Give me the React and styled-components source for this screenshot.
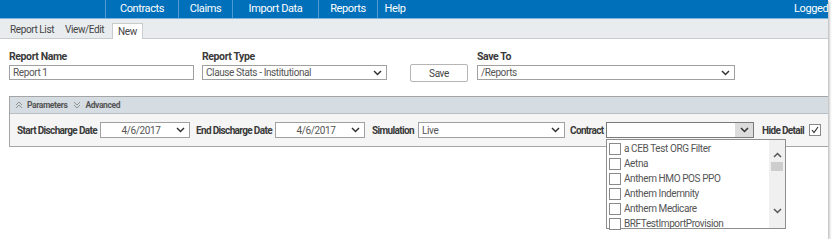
import React from 'react';
import styled, { createGlobalStyle } from 'styled-components';

const GlobalStyle = createGlobalStyle`
  body {
    margin: 0;
    background: #fff;
    font-family: "Roboto", "Liberation Sans", sans-serif;
    font-size: 10px;
    letter-spacing: -0.4px;
    color: #333;
  }
`;

const Page = styled.div`
  width: 828px;
  height: 239px;
  background: #fff;
  box-shadow: 1px 1px 3px rgba(0, 0, 0, 0.35);
  overflow: hidden;
  position: relative;
`;

const TopNav = styled.nav`
  height: 18px;
  background: #0070ba;
  border-bottom: 1px solid #7fb4dd;
  display: flex;
  padding-left: 105px;
  overflow: hidden;
`;

const NavItem = styled.div`
  width: ${(p) => p.w}px;
  flex-shrink: 0;
  border-left: 1px solid #4d9ad2;
  color: #fff;
  font-size: 11px;
  line-height: 18px;
  text-align: center;
  box-sizing: border-box;
  &:last-of-type {
    border-right: 1px solid #4d9ad2;
  }
`;

const Logged = styled.div`
  margin-left: 382px;
  flex-shrink: 0;
  color: #fff;
  font-size: 11px;
  line-height: 18px;
  white-space: nowrap;
`;

const SubTabs = styled.div`
  height: 19px;
  background: #e9ecef;
  border-bottom: 1px solid #c9ccce;
  display: flex;
  align-items: flex-end;
  padding-left: 10px;
`;

const SubTab = styled.div`
  font-size: 10px;
  color: #444;
  height: 14px;
  line-height: 14px;
  padding: 0 ${(p) => (p.active ? '5px' : '0')};
  margin-right: ${(p) => p.mr || 0}px;
  margin-bottom: ${(p) => (p.active ? '-1px' : '1px')};
  background: ${(p) => (p.active ? '#fff' : 'transparent')};
  border: ${(p) => (p.active ? '1px solid #c9ccce' : 'none')};
  border-bottom: none;
  padding-top: ${(p) => (p.active ? '1px' : '0')};
`;

const Form = styled.div`
  display: flex;
  align-items: flex-end;
  padding: 12px 0 0 9px;
`;

const Field = styled.div`
  display: flex;
  flex-direction: column;
  width: ${(p) => p.w}px;
  margin-right: ${(p) => p.mr || 0}px;
`;

const FieldLabel = styled.label`
  font-weight: bold;
  font-size: 10.5px;
  line-height: 12px;
  color: #3a3a3a;
  margin-bottom: 2px;
`;

const TextBox = styled.div`
  height: 15px;
  border: 1px solid #a0a0a0;
  box-sizing: border-box;
  background: #fff;
  color: #555;
  line-height: 13px;
  padding-left: 3px;
`;

const SelectBox = styled.div`
  height: ${(p) => p.h || 15}px;
  width: ${(p) => (p.w ? `${p.w}px` : 'auto')};
  border: 1px solid ${(p) => (p.focus ? '#7a7a7a' : '#a0a0a0')};
  box-sizing: border-box;
  background: #fff;
  color: #555;
  display: flex;
  align-items: center;
  flex-shrink: 0;
`;

const SelectText = styled.span`
  flex: 1;
  padding-left: ${(p) => (p.center ? 10 : 3)}px;
  text-align: ${(p) => (p.center ? 'center' : 'left')};
  white-space: nowrap;
`;

const ChevronBox = styled.span`
  width: 18px;
  align-self: stretch;
  display: flex;
  align-items: center;
  justify-content: center;
  background: ${(p) => (p.hot ? '#dcdcdc' : 'transparent')};
`;

const SaveButton = styled.button`
  width: 58px;
  height: 18px;
  margin: 0 9px -2px 0;
  border: 1px solid #b5b5b5;
  border-radius: 2px;
  background: #fff;
  font-family: inherit;
  font-size: 10px;
  letter-spacing: -0.4px;
  color: #444;
  padding: 0;
`;

const Panel = styled.div`
  margin: 16px 0 0 9px;
  border-left: 1px solid #a5a5a5;
  border-bottom: 1px solid #a5a5a5;
`;

const PanelHeader = styled.div`
  height: 16px;
  background: #d5dce2;
  border-top: 1px solid #a5a5a5;
  border-bottom: 1px solid #b8bec4;
  display: flex;
  align-items: center;
  padding-left: 5px;
  gap: 3px;
`;

const PanelLink = styled.span`
  display: flex;
  align-items: center;
  gap: 4px;
  font-size: 8.5px;
  font-weight: bold;
  color: #555;
  margin-right: 3px;
`;

const PanelBody = styled.div`
  height: 32px;
  background: #f5f5f5;
  display: flex;
  align-items: center;
  padding-left: 7px;
`;

const ParamLabel = styled.span`
  width: ${(p) => p.w}px;
  flex-shrink: 0;
  font-weight: bold;
  color: #3a3a3a;
  font-size: 10px;
  letter-spacing: -0.65px;
  margin-left: ${(p) => p.ml || 0}px;
  white-space: nowrap;
`;

const ContractWrap = styled.div`
  position: relative;
`;

const DropList = styled.div`
  position: absolute;
  left: 0;
  top: 17px;
  width: 180px;
  height: 90px;
  background: #fff;
  border: 1px solid #8e8e8e;
  box-sizing: border-box;
  display: flex;
  z-index: 5;
`;

const Options = styled.div`
  flex: 1;
  padding-top: 1px;
`;

const Option = styled.div`
  height: 15px;
  display: flex;
  align-items: center;
  gap: 3px;
  padding-left: 2px;
  color: #555;
  white-space: nowrap;
`;

const Box = styled.span`
  width: 10px;
  height: 10px;
  border: 1px solid #8a8a8a;
  background: #fff;
  flex-shrink: 0;
  display: flex;
  align-items: center;
  justify-content: center;
`;

const ScrollBar = styled.div`
  width: 16px;
  background: #f0f0f0;
  display: flex;
  flex-direction: column;
  align-items: center;
  padding-top: 12px;
`;

const Thumb = styled.div`
  width: 12px;
  height: 9px;
  background: #cdcdcd;
  margin: 4px 0 37px;
`;

const Chevron = ({ up, color = '#333' }) => (
  <svg width="9" height="6" viewBox="0 0 9 6">
    <path
      d={up ? 'M1 5 L4.5 1.5 L8 5' : 'M1 1 L4.5 4.5 L8 1'}
      fill="none"
      stroke={color}
      strokeWidth="1.5"
    />
  </svg>
);

const DoubleChevron = ({ up }) => (
  <svg width="8" height="8" viewBox="0 0 8 8">
    <path
      d={up ? 'M1 4 L4 1 L7 4 M1 7 L4 4 L7 7' : 'M1 1 L4 4 L7 1 M1 4 L4 7 L7 4'}
      fill="none"
      stroke="#888"
      strokeWidth="0.9"
    />
  </svg>
);

const CheckMark = () => (
  <svg width="8" height="8" viewBox="0 0 8 8">
    <path d="M1 4 L3 6.5 L7 1" fill="none" stroke="#333" strokeWidth="1.2" />
  </svg>
);

const Select = ({ value, w, center, hot, focus }) => (
  <SelectBox w={w} h={16} focus={focus}>
    <SelectText center={center}>{value}</SelectText>
    <ChevronBox hot={hot}>
      <Chevron />
    </ChevronBox>
  </SelectBox>
);

const contracts = [
  'a CEB Test ORG Filter',
  'Aetna',
  'Anthem HMO POS PPO',
  'Anthem Indemnity',
  'Anthem Medicare',
  'BRFTestImportProvision',
];

const App = () => {
  return (
    <>
      <GlobalStyle />
      <Page>
        <TopNav>
          <NavItem w={73}>Contracts</NavItem>
          <NavItem w={54}>Claims</NavItem>
          <NavItem w={86}>Import Data</NavItem>
          <NavItem w={59}>Reports</NavItem>
          <NavItem w={35}>Help</NavItem>
          <Logged>Logged</Logged>
        </TopNav>
        <SubTabs>
          <SubTab mr={11}>Report List</SubTab>
          <SubTab mr={8}>View/Edit</SubTab>
          <SubTab active>New</SubTab>
        </SubTabs>

        <Form>
          <Field w={185} mr={8}>
            <FieldLabel>Report Name</FieldLabel>
            <TextBox>Report 1</TextBox>
          </Field>
          <Field w={185} mr={23}>
            <FieldLabel>Report Type</FieldLabel>
            <SelectBox>
              <SelectText>Clause Stats - Institutional</SelectText>
              <ChevronBox>
                <Chevron />
              </ChevronBox>
            </SelectBox>
          </Field>
          <SaveButton>Save</SaveButton>
          <Field w={258}>
            <FieldLabel>Save To</FieldLabel>
            <SelectBox>
              <SelectText>/Reports</SelectText>
              <ChevronBox>
                <Chevron />
              </ChevronBox>
            </SelectBox>
          </Field>
        </Form>

        <Panel>
          <PanelHeader>
            <PanelLink>
              <DoubleChevron up />
              Parameters
            </PanelLink>
            <PanelLink>
              <DoubleChevron />
              Advanced
            </PanelLink>
          </PanelHeader>
          <PanelBody>
            <ParamLabel w={83}>Start Discharge Date</ParamLabel>
            <Select value="4/6/2017" w={90} center />
            <ParamLabel w={79} ml={6}>End Discharge Date</ParamLabel>
            <Select value="4/6/2017" w={90} center />
            <ParamLabel w={46} ml={7}>Simulation</ParamLabel>
            <Select value="Live" w={147} />
            <ParamLabel w={36} ml={5}>Contract</ParamLabel>
            <ContractWrap>
              <Select value="" w={148} hot focus />
              <DropList>
                <Options>
                  {contracts.map((c) => (
                    <Option key={c}>
                      <Box />
                      {c}
                    </Option>
                  ))}
                </Options>
                <ScrollBar>
                  <Chevron up color="#555" />
                  <Thumb />
                  <Chevron color="#555" />
                </ScrollBar>
              </DropList>
            </ContractWrap>
            <ParamLabel w={47} ml={8}>Hide Detail</ParamLabel>
            <Box>
              <CheckMark />
            </Box>
          </PanelBody>
        </Panel>
      </Page>
    </>
  );
};

export default App;
